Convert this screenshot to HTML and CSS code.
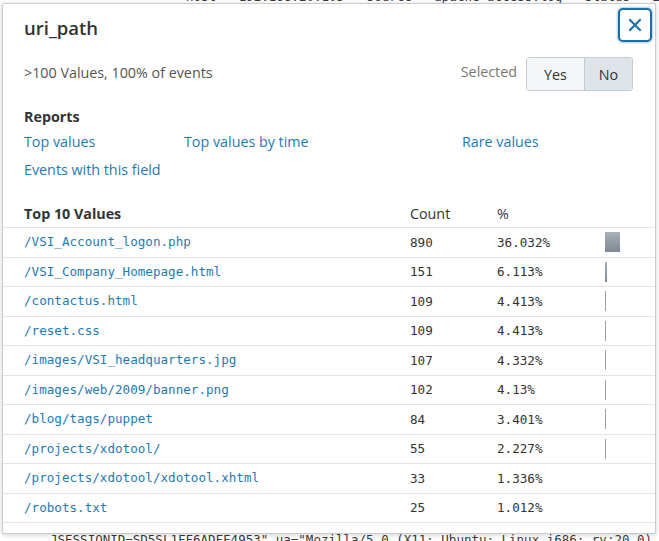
FILE: index.html
```html
<!DOCTYPE html>
<html lang="en">
<head>
<meta charset="utf-8">
<title>uri_path</title>
<link rel="stylesheet" href="styles.css">
</head>
<body>
<div class="page">
  <div class="bg-line bg-top">host = 192.168.20.103&nbsp;&nbsp;&nbsp;source = apache_access.log&nbsp;&nbsp;&nbsp;status = 200</div>
  <div class="bg-spacer"></div>
  <div class="bg-line bg-bottom">JSESSIONID=SD5SL1FF6ADFF4953" ua="Mozilla/5.0 (X11; Ubuntu; Linux i686; rv:20.0) Gecko/20100101</div>
</div>

<div class="popup">
  <button class="close" aria-label="Close">
    <svg width="14" height="14" viewBox="0 0 14 14"><path d="M2 2 L12 12 M12 2 L2 12" stroke="#1b72ab" stroke-width="2.2" stroke-linecap="round" fill="none"/></svg>
  </button>
  <h1 class="title">uri_path</h1>
  <div class="stats">
    <span class="summary">&gt;100 Values, 100% of events</span>
    <div class="selected">
      <span class="selected-label">Selected</span>
      <div class="toggle">
        <span class="tog tog-yes">Yes</span>
        <span class="tog tog-no">No</span>
      </div>
    </div>
  </div>
  <h2 class="reports-title">Reports</h2>
  <div class="reports">
    <a class="link">Top values</a>
    <a class="link">Top values by time</a>
    <a class="link">Rare values</a>
    <a class="link">Events with this field</a>
  </div>
  <div class="table">
    <div class="row head">
      <div class="c-val th-main">Top 10 Values</div>
      <div class="c-count">Count</div>
      <div class="c-pct">%</div>
      <div class="c-bar"></div>
    </div>
    <div class="row"><div class="c-val mono link">/VSI_Account_logon.php</div><div class="c-count mono">890</div><div class="c-pct mono">36.032%</div><div class="c-bar"><span class="bar bar-big" style="width:15px"></span></div></div>
    <div class="row"><div class="c-val mono link">/VSI_Company_Homepage.html</div><div class="c-count mono">151</div><div class="c-pct mono">6.113%</div><div class="c-bar"><span class="bar" style="width:2px"></span></div></div>
    <div class="row"><div class="c-val mono link">/contactus.html</div><div class="c-count mono">109</div><div class="c-pct mono">4.413%</div><div class="c-bar"><span class="bar bar-thin" style="width:1px"></span></div></div>
    <div class="row"><div class="c-val mono link">/reset.css</div><div class="c-count mono">109</div><div class="c-pct mono">4.413%</div><div class="c-bar"><span class="bar bar-thin" style="width:1px"></span></div></div>
    <div class="row"><div class="c-val mono link">/images/VSI_headquarters.jpg</div><div class="c-count mono">107</div><div class="c-pct mono">4.332%</div><div class="c-bar"><span class="bar bar-thin" style="width:1px"></span></div></div>
    <div class="row"><div class="c-val mono link">/images/web/2009/banner.png</div><div class="c-count mono">102</div><div class="c-pct mono">4.13%</div><div class="c-bar"><span class="bar bar-thin" style="width:1px"></span></div></div>
    <div class="row"><div class="c-val mono link">/blog/tags/puppet</div><div class="c-count mono">84</div><div class="c-pct mono">3.401%</div><div class="c-bar"><span class="bar bar-thin" style="width:1px"></span></div></div>
    <div class="row"><div class="c-val mono link">/projects/xdotool/</div><div class="c-count mono">55</div><div class="c-pct mono">2.227%</div><div class="c-bar"><span class="bar bar-thin" style="width:1px"></span></div></div>
    <div class="row"><div class="c-val mono link">/projects/xdotool/xdotool.xhtml</div><div class="c-count mono">33</div><div class="c-pct mono">1.336%</div><div class="c-bar"></div></div>
    <div class="row"><div class="c-val mono link">/robots.txt</div><div class="c-count mono">25</div><div class="c-pct mono">1.012%</div><div class="c-bar"></div></div>
  </div>
</div>
</body>
</html>
```

FILE: styles.css
```css
* { box-sizing: border-box; }
html, body { margin: 0; padding: 0; background: #fff; }
body {
  width: 659px;
  height: 541px;
  overflow: hidden;
  position: relative;
  font-family: "Open Sans", "Liberation Sans", sans-serif;
  color: #333;
}

.bg-line {
  font-family: "DejaVu Sans Mono", monospace;
  font-size: 12.5px;
  line-height: 14px;
  color: #3a3a3a;
  white-space: nowrap;
}
.bg-top { margin-top: -10px; padding-left: 186px; }
.bg-spacer { height: 529px; }
.bg-bottom { padding-left: 50px; }

.popup {
  position: absolute;
  left: 2px;
  top: 3px;
  width: 654px;
  height: 531px;
  background: #fff;
  border: 1px solid #c8ccd0;
  border-radius: 2px;
  box-shadow: 0 1px 5px rgba(0,0,0,0.18);
}

.close {
  position: absolute;
  top: 4px;
  right: 3px;
  width: 34px;
  height: 34px;
  border: 2px solid #1b6fa8;
  border-radius: 5px;
  background: #fff;
  box-shadow: 0 0 2px 1px rgba(27,111,168,0.35);
  display: flex;
  align-items: center;
  justify-content: center;
  padding: 0;
}

.title {
  margin: 12px 0 0 21px;
  font-size: 18.5px;
  line-height: 24px;
  font-weight: 600;
  color: #333;
}

.stats {
  display: flex;
  justify-content: space-between;
  align-items: center;
  margin-top: 17px;
  padding: 0 21px;
}
.summary { font-size: 14.3px; color: #555; margin-top: -3px; }
.selected { display: flex; align-items: center; gap: 9px; }
.selected-label { font-size: 14.3px; color: #777; margin-top: -5px; }
.toggle {
  display: flex;
  height: 34px;
  border: 1px solid #c3cbd4;
  border-radius: 3px;
  overflow: hidden;
  margin-right: 1px;
}
.tog {
  display: flex;
  align-items: center;
  justify-content: center;
  font-size: 14.3px;
  color: #333;
}
.tog-yes { width: 58px; background: #f4f6f8; border-right: 1px solid #c3cbd4; }
.tog-no { width: 47px; background: #dfe4e9; }

.reports-title {
  margin: 16px 0 0 21px;
  font-size: 14.3px;
  line-height: 20px;
  font-weight: 700;
  color: #333;
}
.reports {
  display: grid;
  grid-template-columns: 160px 278px auto;
  row-gap: 8px;
  margin-top: 5px;
  padding-left: 21px;
}
.link { color: #1f7ab3; font-size: 14.3px; line-height: 20px; }

.table { margin-top: 20px; }
.row {
  display: flex;
  align-items: center;
  height: 29.5px;
  border-bottom: 1px solid #e1e5e9;
}
.row.head { height: 28px; }
.c-val { width: 407px; padding-left: 21px; white-space: nowrap; }
.c-count { width: 87px; }
.c-pct { width: 108px; }
.c-bar { flex: 1; display: flex; align-items: center; }
.head .c-count, .head .c-pct { font-size: 14.3px; color: #333; }
.th-main { font-size: 14.3px; font-weight: 700; color: #333; }
.mono {
  font-family: "DejaVu Sans Mono", "Liberation Mono", monospace;
  font-size: 12.6px;
  color: #333;
}
.mono.link { color: #1f7ab3; }
.bar {
  display: block;
  height: 20px;
  background: linear-gradient(#a9b1b9, #7e8892);
}
.bar-thin { background: #9aa3ab; }
```
